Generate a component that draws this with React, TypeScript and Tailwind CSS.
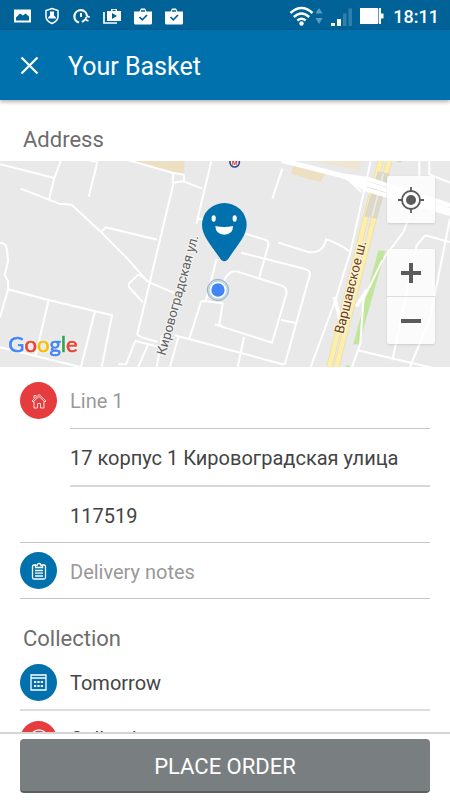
import type { ReactNode } from "react";

const tones = { red: "bg-[#e63c3e]", blue: "bg-[#0071ad]" };

function Badge({ tone, children }: { tone: "red" | "blue"; children?: ReactNode }) {
  return (
    <span className={`flex size-[37px] shrink-0 items-center justify-center rounded-full ${tones[tone]}`}>
      {children}
    </span>
  );
}

function StatusBar() {
  return (
    <div className="flex h-[30px] shrink-0 items-center bg-[#006297] pt-0.5 pr-[11px] pl-[14px] text-white">
      <div className="flex flex-1 items-center gap-[13px]">
        <svg viewBox="0 0 17 16" className="h-4 w-[17px]" fill="none">
          <path d="M0 1.500h17v13H0Z" fill="white" />
          <path d="M2 9.500 6 5.500l3 2 2.500-2L15 8.500v4H2Z" fill="#006297" />
        </svg>
        <svg viewBox="0 0 16 18" className="h-[18px] w-4" fill="none">
          <path d="M8 1.5 14 3.5v6c0 3.5-2.5 5.500-6 7-3.500-1.500-6-3.500-6-7v-6Z" stroke="white" strokeWidth="1.5" />
          <path d="M6 4.500h4v4l2 2v1H4v-1l2-2Z" fill="white" />
        </svg>
        <svg viewBox="0 0 17 17" className="size-[17px]" fill="none" stroke="white">
          <path d="M6 14.500A6.300 6.300 0 1 1 14 8" strokeWidth="2.200" />
          <path d="M8 5v4" strokeWidth="2" />
          <path d="m9 14 4-3" strokeWidth="2" />
          <path d="M16.500 9.500a2 2 0 1 0-1 3" strokeWidth="1.600" />
        </svg>
        <svg viewBox="0 0 18 18" className="size-[18px]" fill="none">
          <path d="M1 5v11h13" stroke="white" strokeWidth="1.700" />
          <path d="M4 4h4V2h6v2h4v10H4Z" fill="white" />
          <path d="M9.500 2.800h3V4h-3Z" fill="#006297" />
          <path d="m9 6 5 3-5 3Z" fill="#006297" />
        </svg>
        {[0, 1].map((n) => (
          <svg key={n} viewBox="0 0 18 17" className="h-[17px] w-[18px]" fill="none">
            <path d="M0 3.500h5.500L7 .5h4l1.500 3H18V15q0 1.500-1.500 1.500h-15Q0 16.500 0 15Z" fill="white" />
            <path d="M7 2.200h4v1.500H7Z" fill="#006297" />
            <path d="m5.500 9 2.800 2.800L13 7" stroke="#006297" strokeWidth="1.700" />
          </svg>
        ))}
      </div>
      <svg viewBox="0 0 96 24" className="mr-2 h-6 w-24" fill="none">
        <g stroke="white" strokeWidth="2.400">
          <path d="M1.500 9q11-10 22 0" />
          <path d="M4.800 13q7.700-7 15.400 0" />
          <path d="M8.300 16.500q4.200-3.500 8.400 0" />
        </g>
        <circle cx="12.500" cy="19.500" r="2.200" fill="white" />
        <path d="M26.500 9.500h7L30 4Zm0 4.500h7L30 20Z" fill="#5c9cc1" />
        <path d="M42 19h4v3h-4Z" fill="white" />
        <path d="M48 15h4v7h-4Z" fill="white" />
        <path d="M54 9.500h3.500V22H54Zm5.500-5H63V22h-3.500Z" fill="#2f80ac" />
        <path d="M71 4h18v16H71Z" fill="white" />
        <path d="M89.500 5v14" stroke="#5c9cc1" />
        <path d="M91 4v16" stroke="white" strokeWidth="2" />
        <path d="M93 9.500v5" stroke="white" strokeWidth="3" />
      </svg>
      <time className="text-[18px] font-medium">18:11</time>
    </div>
  );
}

function StreetMap() {
  return (
    <svg
      viewBox="0 17 1350 618"
      preserveAspectRatio="xMidYMid slice"
      className="block h-[206px] w-full bg-[#e9e9e9]"
      fill="none"
    >
      <path d="M395 17H553v38l-28 2Z" fill="#eddfc2" />
      <path d="m882 25 94 27-14 29-89-26Z" fill="#eddfc2" />
      <path d="m940 17 147 0-12 27-90-18Z" fill="#f0e6d2" />
      <g stroke="white" strokeWidth="6" strokeLinejoin="round">
        <path d="M0 27 163 68 182 17M163 68l-16 65M62 100l85 33 30 12 38 3 88 82 82 83 58 66M260 13l32 8-26 103M303 230l14-14 155 37" />
        <path d="M380 13 520 53l33 5M520 53l-2 29 14-2M551 58l2 20-21 2-11 2-72 300-37 155q2 8 60 22M551 78l56 22M634 17l-45 190M589 192h22" />
        <path d="m415 357-28 28 0 10 42 46M417 357l31 24 99 42M0 263q18-2 21 20l3 35q-4 20-10 40l10 20v25L0 486M24 402l122 32 190 46-31 155M146 434l-40 170M285 467l-42 168M0 576l240 59M470 635l17-95M445 565l-30 70M355 627h23l28-70 70 17M525 540l150 40M535 545l-25 90" />
        <path d="m650 310-32 125-15 5-35 110M605 436l63 8-10 65 17 9" />
      </g>
      <g transform="translate(675 0)" stroke="white" strokeWidth="6" strokeLinejoin="round">
        <path d="m60 235 66 20q6 4 4 15l-27 96M48 292l190 48q20 5 16 20l-75 268M-10 390l10-20q12-24 35-22l135 43q18 8 14 25l-43 146L0 517l-30-10M168 494l49 10M57 545 38 635M0 580l177 48M160 262l90 28q44 6 53-38 40 12 70 36M172 40l-30 90" />
        <path d="m437 17-60 270-45 145-75 203M355 60l55 50M583 17v50M613 17v40l62 25M555 180l-20 50-63 85M600 240l75 20M600 240l-25 30-73 345M675 190l-60 300-60 145M398 585l277 65" />
      </g>
      <g transform="translate(675 0)">
        <path d="m460 286 21 0-79 281h-17Z" fill="#c1e59a" />
        <path d="m472 315-46 95-10 15-10 140-25 70" stroke="white" strokeWidth="6" />
        <path d="M516 17h14v4h-14ZM364 630h10v5h-10Z" fill="#c1e59a" />
        <path d="m469 10-50 190-106 435" stroke="#e8dcae" strokeWidth="18" />
        <path d="m494 10-50 190-110 435" stroke="#e8dcae" strokeWidth="18" />
        <path d="m469 10-50 190-106 435" stroke="#fdeeaa" strokeWidth="14" />
        <path d="m494 10-50 190-110 435" stroke="#fdeeaa" strokeWidth="14" />
        <path d="m458 48 36 7-38 135-38-7Z" fill="#dbd7cb" />
        <path d="m475 55-34 130" stroke="#eeeae0" strokeWidth="5" />
        <path d="m170 15 180 46 325 105" stroke="white" strokeWidth="15" />
        <path d="m355 61 70 42 250 73M355 61l75 10 245 79" stroke="white" strokeWidth="13" />
        <path d="m328 425 18 70" stroke="white" strokeWidth="11" />
        <path d="m426 403-32 50" stroke="white" strokeWidth="10" />
      </g>
      <circle cx="704" cy="21" r="14" fill="white" stroke="#304b86" strokeWidth="5" />
      <text x="704" y="29" textAnchor="middle" fontSize="20" fontWeight="700" fill="#d93a3a">М</text>
      <g fontSize="40" strokeLinejoin="round" strokeWidth="7">
        <text transform="translate(496 602) rotate(-74.500)" fill="#616161" stroke="#f4f4f4" paintOrder="stroke">
          Кировоградская ул.
        </text>
        <text transform="translate(1030 537) rotate(-76)" fill="#6b3d1a" stroke="#fff6d8" paintOrder="stroke">
          Варшавское ш.
        </text>
      </g>
      <circle cx="654" cy="404" r="32" fill="#c3d7e6" stroke="#8db2c8" strokeWidth="3" />
      <circle cx="654" cy="404" r="25" fill="white" />
      <circle cx="654" cy="404" r="20" fill="#4285f4" />
      <path d="M673 318q-8 0-15-12c-25-38-52-64-52-98a67 65 0 0 1 134 0c0 34-28 60-52 98q-7 12-15 12Z" fill="#0071ad" />
      <rect x="635" y="180" width="12" height="19" rx="6" fill="white" />
      <rect x="698" y="180" width="12" height="19" rx="6" fill="white" />
      <path d="M646 212q27 6 53 0 0 26-26 26t-27-26Z" fill="white" />
      <text
        x="25"
        y="590"
        fontSize="66"
        strokeWidth="2"
        className="font-[Lato,sans-serif] drop-shadow-[0_0_3px_white]"
      >
        <tspan fill="#4285f4" stroke="#4285f4">G</tspan>
        <tspan fill="#ea4335" stroke="#ea4335">o</tspan>
        <tspan fill="#fbbc05" stroke="#fbbc05">o</tspan>
        <tspan fill="#4285f4" stroke="#4285f4">g</tspan>
        <tspan fill="#34a853" stroke="#34a853">l</tspan>
        <tspan fill="#ea4335" stroke="#ea4335">e</tspan>
      </text>
    </svg>
  );
}

function MapControls() {
  return (
    <div className="absolute top-[15px] right-[15px] flex w-12 flex-col gap-[26px] text-[#5b5b5b]">
      <button aria-label="My location" className="flex h-[47px] items-center justify-center rounded-xs bg-white/80 shadow">
        <svg viewBox="0 0 28 28" className="size-7" fill="none" stroke="currentColor">
          <circle cx="14" cy="14" r="9" strokeWidth="1.800" />
          <circle cx="14" cy="14" r="5" fill="currentColor" stroke="none" />
          <path d="M14 1v5M14 22v5M1 14h5M22 14h5" strokeWidth="1.800" />
        </svg>
      </button>
      <div className="flex flex-col divide-y divide-[#dddddd] rounded-xs bg-white/80 shadow">
        <button aria-label="Zoom in" className="flex h-12 items-center justify-center">
          <svg viewBox="0 0 22 22" className="size-[22px]" stroke="currentColor" strokeWidth="4">
            <path d="M11 1v20M1 11h20" />
          </svg>
        </button>
        <button aria-label="Zoom out" className="flex h-[47px] items-center justify-center">
          <svg viewBox="0 0 22 22" className="size-[22px]" stroke="currentColor" strokeWidth="4">
            <path d="M1 11h20" />
          </svg>
        </button>
      </div>
    </div>
  );
}

const field = "h-full w-full min-w-0 bg-transparent pt-0.5 text-[20px] text-[#444444] outline-none placeholder:text-[#999999]";

export default function App() {
  return (
    <div className="flex h-screen flex-col overflow-hidden bg-white font-[Roboto,sans-serif]">
      <StatusBar />
      <header className="z-10 flex h-[70px] shrink-0 items-center gap-[29px] bg-[#0071ad] px-5 text-white shadow-[0_2px_4px_rgba(0,0,0,0.3)]">
        <button aria-label="Close">
          <svg viewBox="0 0 19 19" className="size-[19px]" stroke="currentColor" strokeWidth="2.200">
            <path d="m1.500 1.500 16 16M17.500 1.500l-16 16" />
          </svg>
        </button>
        <h1 className="pt-1 text-[25px] leading-8">Your Basket</h1>
      </header>

      <main className="min-h-0 flex-1 overflow-hidden">
        <h2 className="px-[23px] pt-6 pb-[5px] text-[22px] leading-8 text-[#6d6d6d]">Address</h2>
        <div className="relative">
          <StreetMap />
          <MapControls />
        </div>

        <form className="px-5">
          <div className="flex h-[62px] gap-[13px] pt-[5px]">
            <span className="flex items-center">
              <Badge tone="red">
                <svg viewBox="0 0 16 16" className="size-4" fill="none" stroke="#ffdada">
                  <path d="m1 8 7-6.500L15 8l-1 1-6-5.500L2 9Z" />
                  <path d="M3 8.500V15h3.500v-4.500h3V15H13V8.500M3 5.500v-3h2v1" />
                </svg>
              </Badge>
            </span>
            <div className="flex-1 border-b border-[#c6c6c6]">
              <input aria-label="Address line 1" placeholder="Line 1" className={field} />
            </div>
          </div>
          <div className="ml-[50px] h-[58px] border-b-2 border-[#d8d8d8]">
            <input aria-label="Street" defaultValue="17 корпус 1 Кировоградская улица" className={field} />
          </div>
          <div className="h-14 border-b border-[#c6c6c6] pl-[50px]">
            <input aria-label="Postcode" defaultValue="117519" className={field} />
          </div>
          <div className="flex h-14 items-center gap-[13px] border-b border-[#c6c6c6]">
            <Badge tone="blue">
              <svg viewBox="0 0 16 18" className="h-[18px] w-4" fill="none" stroke="white" strokeWidth="1.300">
                <path d="M5 3H3Q1.500 3 1.500 4.500v11Q1.500 17 3 17h10q1.500 0 1.500-1.500v-11Q14.500 3 13 3h-2" />
                <path d="M4.500 5.500V3.500H6a2 2 0 0 1 4 0h1.500v2ZM4 8.500h8M4 11.200h8M4 14h8" />
              </svg>
            </Badge>
            <input aria-label="Delivery notes" placeholder="Delivery notes" className={field} />
          </div>

          <h2 className="px-[3px] pt-6 text-[22px] leading-8 text-[#6d6d6d]">Collection</h2>
          <button type="button" className="flex h-14 w-full items-center gap-[13px] border-b-2 border-[#dddddd] text-left text-[20px] text-[#444444]">
            <Badge tone="blue">
              <svg viewBox="0 0 17 17" className="size-[17px]" fill="none" stroke="white" strokeWidth="1.300">
                <path d="M1 1h15v15H1ZM1 4h15" />
                <path d="M4 8h9M4 12h9" strokeWidth="2.200" strokeDasharray="2.200 1.200" />
              </svg>
            </Badge>
            <span className="pt-0.5">Tomorrow</span>
          </button>
          <button type="button" className="flex h-14 w-full items-center gap-[13px] text-left text-[20px] text-[#444444]">
            <Badge tone="red">
              <svg viewBox="0 0 20 20" className="size-5" fill="none" stroke="white" strokeWidth="1.300">
                <circle cx="10" cy="10" r="9" />
                <path d="M10 4v6l4 2" />
              </svg>
            </Badge>
            <span>Collection</span>
          </button>
        </form>
      </main>

      <footer className="shrink-0 border-t-2 border-[#d5d5d5] bg-white px-5 pt-[5px] pb-[7px]">
        <button className="h-[54px] w-full rounded-sm border-b-2 border-[#5b5f60] bg-[#797e80] pt-0.5 text-[22px] text-white">
          PLACE ORDER
        </button>
      </footer>
    </div>
  );
}
